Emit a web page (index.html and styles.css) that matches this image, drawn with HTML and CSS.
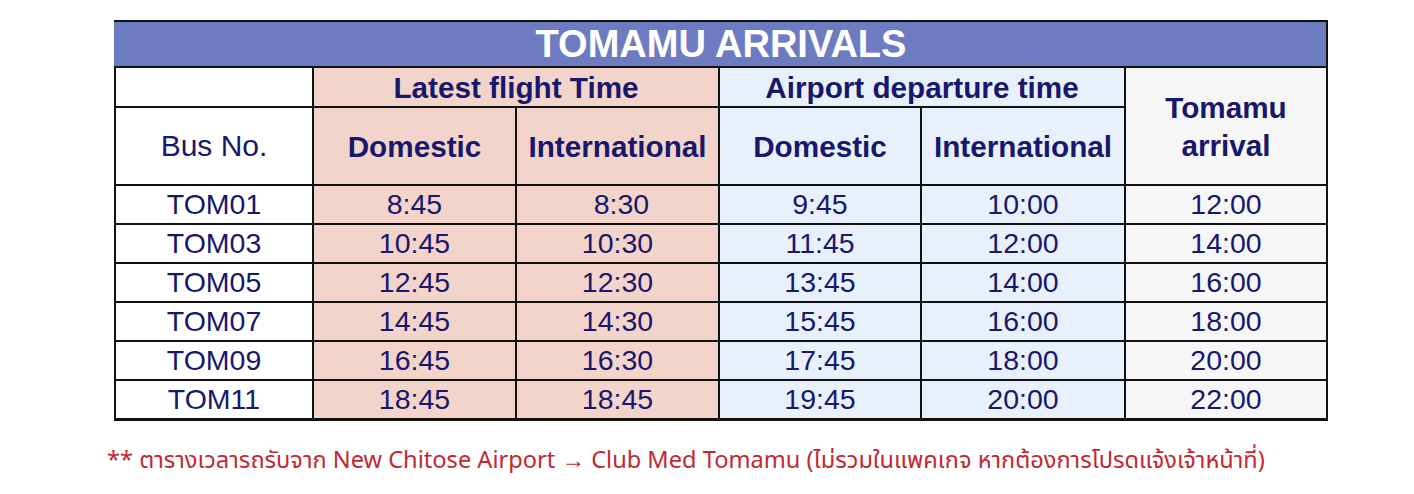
FILE: index.html
```html
<!DOCTYPE html>
<html lang="th">
<head>
<meta charset="utf-8">
<title>Tomamu Arrivals</title>
<link rel="stylesheet" href="styles.css">
</head>
<body>
<div class="page">
  <table class="sched">
    <colgroup>
      <col class="c1"><col class="c2"><col class="c3"><col class="c4"><col class="c5"><col class="c6">
    </colgroup>
    <thead>
      <tr class="r-title"><th colspan="6" class="title">TOMAMU ARRIVALS</th></tr>
      <tr class="r-h1">
        <th class="white"></th>
        <th colspan="2" class="pink bold">Latest flight Time</th>
        <th colspan="2" class="blue bold">Airport departure time</th>
        <th rowspan="2" class="grey bold">Tomamu<br>arrival</th>
      </tr>
      <tr class="r-h2">
        <th class="white reg">Bus No.</th>
        <th class="pink bold">Domestic</th>
        <th class="pink bold">International</th>
        <th class="blue bold">Domestic</th>
        <th class="blue bold">International</th>
      </tr>
    </thead>
    <tbody>
      <tr><td class="white">TOM01</td><td class="pink">8:45</td><td class="pink">&nbsp;8:30</td><td class="blue">9:45</td><td class="blue">10:00</td><td class="grey">12:00</td></tr>
      <tr><td class="white">TOM03</td><td class="pink">10:45</td><td class="pink">10:30</td><td class="blue">11:45</td><td class="blue">12:00</td><td class="grey">14:00</td></tr>
      <tr><td class="white">TOM05</td><td class="pink">12:45</td><td class="pink">12:30</td><td class="blue">13:45</td><td class="blue">14:00</td><td class="grey">16:00</td></tr>
      <tr><td class="white">TOM07</td><td class="pink">14:45</td><td class="pink">14:30</td><td class="blue">15:45</td><td class="blue">16:00</td><td class="grey">18:00</td></tr>
      <tr><td class="white">TOM09</td><td class="pink">16:45</td><td class="pink">16:30</td><td class="blue">17:45</td><td class="blue">18:00</td><td class="grey">20:00</td></tr>
      <tr class="last"><td class="white">TOM11</td><td class="pink">18:45</td><td class="pink">18:45</td><td class="blue">19:45</td><td class="blue">20:00</td><td class="grey">22:00</td></tr>
    </tbody>
  </table>
  <p class="note">** ตารางเวลารถรับจาก New Chitose Airport → Club Med Tomamu (ไม่รวมในแพคเกจ หากต้องการโปรดแจ้งเจ้าหน้าที่)</p>
</div>
</body>
</html>
```
FILE: styles.css
```css
html, body {
  margin: 0;
  padding: 0;
  background: #ffffff;
}
.page {
  padding: 20px 0 0 114px;
}
.sched {
  border-collapse: collapse;
  table-layout: fixed;
  width: 1212px;
  font-family: "Liberation Sans", Arial, sans-serif;
  color: #17186b;
  border-left: 1px solid #8a8a8a;
  border-bottom: 3px solid #111;
  border-right: 2px solid #222;
}
.c1 { width: 198px; }
.c2 { width: 203px; }
.c3 { width: 203px; }
.c4 { width: 202px; }
.c5 { width: 204px; }
.c6 { width: 202px; }
.sched th, .sched td {
  border: 2px solid #111;
  padding: 0;
  text-align: center;
  vertical-align: middle;
  line-height: 1;
}
.sched td {
  font-size: 28.5px;
  font-weight: normal;
  height: 37px;
}
.title {
  background: #6d7cc1;
  color: #ffffff;
  font-size: 38px;
  font-weight: bold;
  height: 44px;
  border-top: 2px solid #333;
  border-left-color: #6d7cc1 !important;
}
.r-h1 th { height: 37px; }
.r-h2 th { height: 76px; }
.bold {
  font-size: 29.7px;
  font-weight: bold;
  line-height: 1.25 !important;
}
.reg {
  font-size: 30px;
  font-weight: normal;
}
.white { background: #ffffff; }
.pink { background: #f3d4cb; }
.blue { background: #e8f0fc; }
.grey { background: #f6f6f6; }
.r-h1 th.bold { padding-top: 1px; }
.note {
  margin: 24px 0 0 -7px;
  font-family: "Noto Sans", "Noto Sans Thai", "Open Sans", sans-serif;
  font-size: 23.6px;
  color: #c3282e;
  line-height: 1.2;
}
```
